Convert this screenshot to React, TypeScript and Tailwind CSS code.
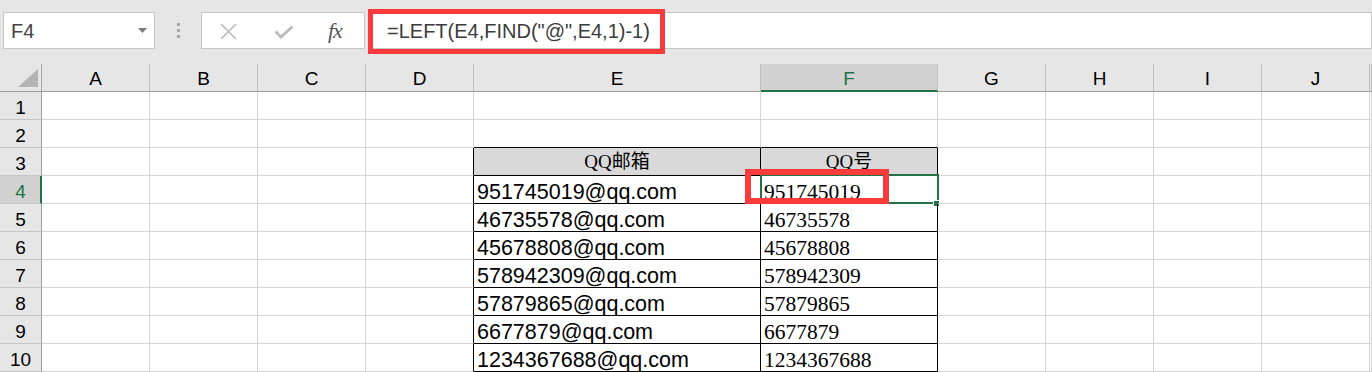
const cols = ['A', 'B', 'C', 'D', 'E', 'F', 'G', 'H', 'I', 'J', '']

const data: Record<number, [string, string]> = {
  4: ['951745019@qq.com', '951745019'],
  5: ['46735578@qq.com', '46735578'],
  6: ['45678808@qq.com', '45678808'],
  7: ['578942309@qq.com', '578942309'],
  8: ['57879865@qq.com', '57879865'],
  9: ['6677879@qq.com', '6677879'],
  10: ['1234367688@qq.com', '1234367688'],
}

function cellBorder(row: number, col: number) {
  // col: 1 = A ... 5 = E, 6 = F
  const inTable = row >= 3 && row <= 10
  const right = inTable && col >= 4 && col <= 6 ? 'border-r-black' : 'border-r-[#d4d4d4]'
  const bottom = row >= 2 && (col === 5 || col === 6) ? 'border-b-black' : 'border-b-[#d4d4d4]'
  return `${right} ${bottom}`
}

function Toolbar() {
  return (
    <div className="relative h-[64px] bg-[#e6e6e6] flex items-start pt-[12px] pl-[3px]">
      <div className="w-[152px] h-[37px] bg-white border border-[#c6c6c6] flex items-center justify-between pl-[7px] pr-[7px]">
        <span className="text-[20px] text-[#444] font-['Liberation_Sans',sans-serif] leading-none">F4</span>
        <svg width="9" height="5" viewBox="0 0 9 5">
          <polygon points="0,0 9,0 4.5,5" fill="#7a7a7a" />
        </svg>
      </div>
      <div className="w-[46px] h-[37px] flex flex-col items-center justify-center gap-[3px]">
        <div className="w-[3px] h-[3px] bg-[#a8a8a8]" />
        <div className="w-[3px] h-[3px] bg-[#a8a8a8]" />
        <div className="w-[3px] h-[3px] bg-[#a8a8a8]" />
      </div>
      <div className="w-[164px] h-[37px] bg-white border border-[#c6c6c6] flex items-center pl-[17px]">
        <svg width="19" height="17" viewBox="0 0 19 17" className="mt-[1px]">
          <path d="M2 1 L17 16 M17 1 L2 16" stroke="#b9b9b9" strokeWidth="1.6" />
        </svg>
        <svg width="20" height="14" viewBox="0 0 20 14" className="ml-[36px] mt-[3px]">
          <path d="M1.5 6.5 L7 12 L18.5 1.5" stroke="#bcbcbc" strokeWidth="3" fill="none" />
        </svg>
        <span className="ml-[34px] text-[22px] italic text-[#555] font-['Liberation_Serif',serif] leading-none tracking-[-1px]">fx</span>
      </div>
      <div className="ml-[3px] flex-1 h-[37px] bg-white border border-[#c6c6c6] flex items-center pl-[18px]">
        <span className="text-[20px] text-[#3c3c3c] font-['Liberation_Sans',sans-serif] leading-none">=LEFT(E4,FIND("@",E4,1)-1)</span>
      </div>
      <div className="absolute left-[368px] top-[9px] w-[297px] h-[45px] border-[5px] border-[#f93b3b]" />
    </div>
  )
}

export default function App() {
  const rows = [1, 2, 3, 4, 5, 6, 7, 8, 9, 10]
  return (
    <div className="w-[1372px] h-[372px] overflow-hidden bg-white font-['Liberation_Sans',sans-serif]">
      <Toolbar />
      <div className="grid grid-cols-[42px_108px_108px_108px_108px_287px_177px_108px_108px_108px_108px_1fr]">
        {/* column headers */}
        <div className="h-[28px] bg-[#e6e6e6] border-r border-b border-r-[#a6a6a6] border-b-[#9e9e9e] flex items-end justify-end pr-[3px] pb-[4px]">
          <svg width="20" height="18" viewBox="0 0 20 18">
            <polygon points="20,0 20,18 0,18" fill="#b4b4b4" />
          </svg>
        </div>
        {cols.map((c) =>
          c === 'F' ? (
            <div key={c} className="h-[28px] bg-[#d2d2d2] border-r border-r-[#bdbdbd] border-b-2 border-b-[#217346] flex items-end justify-center pb-[2px]">
              <span className="text-[19px] leading-none text-[#217346]">{c}</span>
            </div>
          ) : (
            <div key={c || 'K'} className="h-[28px] bg-[#e6e6e6] border-r border-r-[#bdbdbd] border-b border-b-[#9e9e9e] flex items-end justify-center pb-[3px]">
              <span className="text-[19px] leading-none text-black">{c}</span>
            </div>
          )
        )}

        {rows.map((r) => (
          <div key={r} className="contents">
            {r === 4 ? (
              <div className="h-[28px] bg-[#d2d2d2] border-r-2 border-r-[#217346] border-b border-b-[#c6c6c6] flex items-end justify-center pb-[2px] pl-[1px]">
                <span className="text-[19px] leading-none text-[#217346]">{r}</span>
              </div>
            ) : (
              <div className="h-[28px] bg-[#e6e6e6] border-r border-r-[#9e9e9e] border-b border-b-[#c6c6c6] flex items-end justify-center pb-[2px]">
                <span className="text-[19px] leading-none text-black">{r}</span>
              </div>
            )}
            {cols.map((c, i) => {
              const col = i + 1
              const base = `relative h-[28px] border-r border-b ${cellBorder(r, col)}`
              if (r === 3 && (c === 'E' || c === 'F')) {
                return (
                  <div key={c} className={`${base} bg-[#d9d9d9] flex items-end justify-center pb-[4px]`}>
                    <span className="text-[19px] leading-none text-black font-['Liberation_Serif','Noto_Sans_CJK_SC',serif]">
                      {c === 'E' ? 'QQ邮箱' : 'QQ号'}
                    </span>
                  </div>
                )
              }
              if (data[r] && c === 'E') {
                return (
                  <div key={c} className={`${base} flex items-end pl-[3px]`}>
                    <span className="text-[21.5px] leading-none text-black">{data[r][0]}</span>
                  </div>
                )
              }
              if (data[r] && c === 'F') {
                return (
                  <div key={c} className={`${base} flex items-end pl-[3px]`}>
                    <span className="text-[21.5px] leading-none text-black font-['Liberation_Serif',serif]">{data[r][1]}</span>
                    {r === 4 && (
                      <>
                        <div className="absolute -left-[1px] -top-[2px] w-[179px] h-[30px] border-2 border-[#217346]" />
                        <div className="absolute left-[172px] top-[24px] w-[7px] h-[7px] bg-[#217346] border border-white" />
                        <div className="absolute -left-[16px] -top-[7px] w-[144px] h-[35px] border-[6px] border-[#f93b3b]" />
                      </>
                    )}
                  </div>
                )
              }
              return <div key={c || 'K'} className={base} />
            })}
          </div>
        ))}
      </div>
    </div>
  )
}
